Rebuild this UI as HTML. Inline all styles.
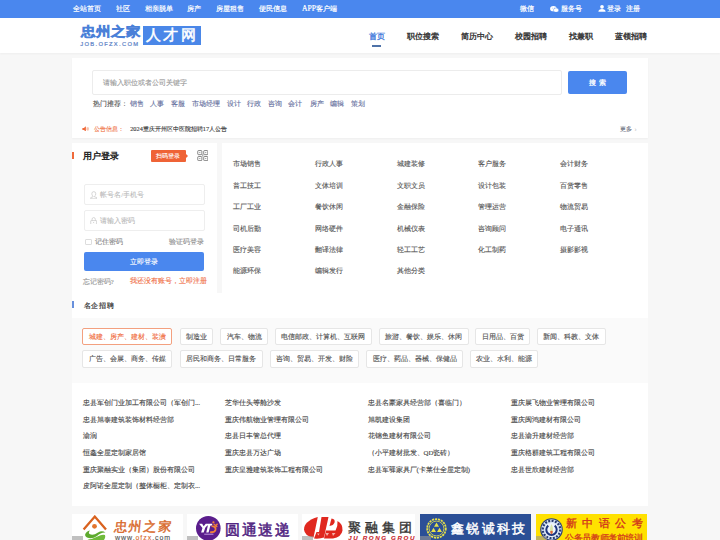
<!DOCTYPE html>
<html><head><meta charset="utf-8">
<style>
*{margin:0;padding:0;box-sizing:border-box}
html,body{width:720px;height:540px;overflow:hidden;background:#f7f7f7;font-family:"Liberation Serif",serif;color:#333}
.a,.cat,.tag,.co,.nav,#top span{-webkit-text-stroke:0.12px currentColor}
.a{position:absolute;white-space:nowrap}
#top{position:absolute;left:0;top:0;width:720px;height:17.5px;background:#4a87ee}
#top span{position:absolute;top:0;line-height:17.5px;font-size:6.8px;color:#fff;-webkit-text-stroke:0.2px #fff !important}
#hdr{position:absolute;left:0;top:17.5px;width:720px;height:35.5px;background:#fff;box-shadow:0 1px 2px rgba(0,0,0,.04)}
.nav{position:absolute;top:31.5px;font-size:7.9px;line-height:10px;color:#333;-webkit-text-stroke:0.35px currentColor !important}
.box{position:absolute;background:#fff}
.t7{font-size:6.8px;line-height:9px}
.cat{position:absolute;font-size:6.8px;line-height:9px;color:#555}
.tag{position:absolute;height:17.6px;border:1px solid #e6e6e6;border-radius:2px;background:#fff;font-size:6.8px;line-height:15.6px;color:#505050;text-align:center;white-space:nowrap}
.co{position:absolute;font-size:6.8px;line-height:9px;color:#444;white-space:nowrap}
</style></head><body>
<div id="top">
<span style="left:73px">全站首页</span>
<span style="left:116px">社区</span>
<span style="left:145px">相亲脱单</span>
<span style="left:187px">房产</span>
<span style="left:216px">房屋租售</span>
<span style="left:258.5px">便民信息</span>
<span style="left:302px"><i style="font-style:normal;font-size:7.6px">APP</i>客户端</span>
<span style="left:520px">微信</span>
<svg style="position:absolute;left:549.9px;top:5.6px" width="8.8" height="6.6" viewBox="0 0 13 10"><ellipse cx="5" cy="4" rx="5" ry="4" fill="#fff"/><ellipse cx="9" cy="6.3" rx="4" ry="3.4" fill="#fff" stroke="#4a87ee" stroke-width="0.7"/><circle cx="3.3" cy="3.2" r="0.6" fill="#4a87ee"/><circle cx="6.5" cy="3.2" r="0.6" fill="#4a87ee"/></svg>
<span style="left:561.1px">服务号</span>
<svg style="position:absolute;left:598px;top:5.4px" width="8" height="6.8" viewBox="0 0 10 8.5"><circle cx="5" cy="2.3" r="2.3" fill="#fff"/><path d="M0.5 8.5 Q0.8 5.2 5 5.1 Q9.2 5.2 9.5 8.5Z" fill="#fff"/></svg>
<span style="left:607.2px">登录</span>
<span style="left:626.3px">注册</span>
</div>
<div id="hdr"></div>
<!-- logo -->
<div class="a" style="left:80.5px;top:24.2px;font-family:'Liberation Sans',sans-serif;font-size:14.6px;color:#4a80d8;-webkit-text-stroke:1.2px #4a80d8;line-height:17px;letter-spacing:0.1px;transform:scaleY(0.9);transform-origin:0 0">忠州之家</div>
<div class="a" style="left:80.3px;top:40.5px;font-family:'Liberation Sans',sans-serif;font-size:5.8px;color:#5a7fc6;line-height:6px;letter-spacing:1.3px;-webkit-text-stroke:0.2px #5a7fc6">JOB.OFZX.COM</div>
<div class="a" style="left:142.9px;top:25.8px;width:57.8px;height:19.3px;background:#4a87e8"></div>
<div class="a" style="left:145.5px;top:26px;font-family:'Liberation Sans',sans-serif;color:#fff;font-size:14.5px;line-height:19px;letter-spacing:2.6px;-webkit-text-stroke:0.5px #fff">人才网</div>
<div class="nav" style="left:368.8px;color:#4a80dc">首页</div>
<div class="a" style="left:372px;top:45.4px;width:9px;height:1.5px;background:#4e72a8"></div>
<div class="nav" style="left:406.7px">职位搜索</div>
<div class="nav" style="left:460.8px">简历中心</div>
<div class="nav" style="left:515px">校园招聘</div>
<div class="nav" style="left:568.9px">找兼职</div>
<div class="nav" style="left:614.9px">蓝领招聘</div>

<!-- search box -->
<div class="box" style="left:72px;top:57.7px;width:576px;height:80.5px;box-shadow:0 1px 1.5px rgba(0,0,0,.035)"></div>
<div class="a" style="left:92.2px;top:70.1px;width:470px;height:24.5px;border:1px solid #ececec;border-radius:2px"></div>
<div class="a t7" style="left:103.3px;top:77.6px;color:#999">请输入职位或者公司关键字</div>
<div class="a" style="left:567.5px;top:70.5px;width:59.7px;height:23.7px;background:#4a87ee;border-radius:2px;color:#fff;font-size:7.4px;line-height:24.4px;text-align:center;letter-spacing:3.4px;text-indent:3.6px;-webkit-text-stroke:0.25px #fff !important">搜索</div>
<div class="a t7" style="left:92.9px;top:99.4px;color:#555">热门推荐：</div>
<div class="a t7" style="left:129.6px;top:99.4px;color:#66709e;word-spacing:0">
<span class="a" style="left:0">销售</span><span class="a" style="left:20.8px">人事</span><span class="a" style="left:41.5px">客服</span><span class="a" style="left:62.2px">市场经理</span><span class="a" style="left:97.1px">设计</span><span class="a" style="left:117.5px">行政</span><span class="a" style="left:138.2px">咨询</span><span class="a" style="left:158.8px">会计</span><span class="a" style="left:180px">房产</span><span class="a" style="left:200.4px">编辑</span><span class="a" style="left:221.5px">策划</span>
</div>
<svg class="a" style="left:82.3px;top:125.6px" width="7.2" height="5.8" viewBox="0 0 12 10"><path d="M0.5 3.3 H3 L6.5 0.5 V9.5 L3 6.7 H0.5Z" fill="#f06a3a"/><path d="M8.2 3 Q9.3 5 8.2 7 M9.8 1.8 Q11.6 5 9.8 8.2" fill="none" stroke="#f06a3a" stroke-width="0.9"/></svg>
<div class="a" style="left:94px;top:123.9px;font-size:6.3px;line-height:9px;color:#f0764a">公告信息：</div>
<div class="a" style="left:130.2px;top:123.9px;font-size:6.3px;line-height:9px;color:#333">2024重庆开州区中医院招聘17人公告</div>
<div class="a" style="left:620.3px;top:123.8px;font-size:6.3px;line-height:9px;color:#6a6f80">更多</div><div class="a" style="left:634.5px;top:123.5px;font-size:6.5px;line-height:9px;color:#c8c8c8">›</div>

<!-- login box -->
<div class="box" style="left:72px;top:143.3px;width:144.8px;height:150px"></div>
<div class="a" style="left:72.2px;top:151.8px;width:1.8px;height:7.3px;background:#f06a3a"></div>
<div class="a" style="left:83.3px;top:150.8px;font-size:8.8px;line-height:10px;color:#222;-webkit-text-stroke:0.4px #222 !important">用户登录</div>
<div class="a" style="left:151px;top:149.5px;width:34.8px;height:12.5px;background:#ef6336;border-radius:1px;color:#fff;font-size:6.3px;line-height:12.4px;text-align:center">扫码登录</div>
<div class="a" style="left:186px;top:153.6px;width:0;height:0;border-top:2.2px solid transparent;border-bottom:2.2px solid transparent;border-left:2.2px solid #ef6336"></div>
<svg class="a" style="left:196.6px;top:150.3px" width="11.6" height="11.2" viewBox="0 0 12 12"><g fill="none" stroke="#666" stroke-width="0.85"><rect x="0.6" y="0.6" width="4.4" height="4.4" rx="0.8"/><rect x="7" y="0.6" width="4.4" height="4.4" rx="0.8"/><rect x="0.6" y="7" width="4.4" height="4.4" rx="0.8"/><rect x="7" y="7" width="4.4" height="4.4" rx="0.8"/></g><g fill="#777"><rect x="2.3" y="2.3" width="1" height="1"/><rect x="8.7" y="2.3" width="1" height="1"/><rect x="2.3" y="8.7" width="1" height="1"/><rect x="8.7" y="8.7" width="1" height="1"/><rect x="5.6" y="4.5" width="0.9" height="2.6"/></g></svg>

<div class="a" style="left:84.2px;top:184.3px;width:120.6px;height:20.6px;border:1px solid #eee;border-radius:2px"></div>
<div class="a" style="left:84.2px;top:210.2px;width:120.6px;height:20.8px;border:1px solid #eee;border-radius:2px"></div>
<svg class="a" style="left:89.6px;top:190.6px" width="7.6" height="8.4" viewBox="0 0 10 11"><g fill="none" stroke="#c4c4c4" stroke-width="0.9"><path d="M5 0.8 Q7.6 0.8 7.6 3.6 Q7.6 6 5.9 6.8 V7.6 L9 8.6 V10.3 H1 V8.6 L4.1 7.6 V6.8 Q2.4 6 2.4 3.6 Q2.4 0.8 5 0.8Z"/></g></svg>
<div class="a t7" style="left:100.3px;top:190.1px;color:#bbb;font-size:6.5px">帐号名/手机号</div>
<svg class="a" style="left:89.8px;top:216.6px" width="7.4" height="7.8" viewBox="0 0 10 10.5"><g fill="none" stroke="#c4c4c4" stroke-width="0.9"><path d="M2.8 4.8 V3.2 Q2.8 0.7 5 0.7 Q7.2 0.7 7.2 3.2 V4.8"/><rect x="1" y="4.8" width="8" height="5.2" rx="0.6"/></g><circle cx="5" cy="7.4" r="0.7" fill="#c4c4c4"/></svg>
<div class="a t7" style="left:100.3px;top:216px;color:#bbb;font-size:6.5px">请输入密码</div>
<div class="a" style="left:84.8px;top:238.8px;width:6.8px;height:6.6px;border:1px solid #ddd;border-radius:1px"></div>
<div class="a t7" style="left:95px;top:236.6px;color:#8a8a8a">记住密码</div>
<div class="a t7" style="left:169.4px;top:236.6px;color:#8f8f8f">验证码登录</div>
<div class="a" style="left:84.2px;top:251.8px;width:120.2px;height:19.4px;background:#4a87ee;border-radius:2px;color:#fff;font-size:7px;line-height:21px;text-align:center">立即登录</div>
<div class="a t7" style="left:82.8px;top:276.5px;color:#999">忘记密码?</div>
<div class="a t7" style="left:130.1px;top:276.3px;color:#f0714a">我还没有账号，立即注册</div>

<!-- categories -->
<div class="box" style="left:221.9px;top:143.3px;width:426.1px;height:150px"></div>
<div class="cat" style="left:233.3px;top:159px">市场销售</div>
<div class="cat" style="left:315.0px;top:159px">行政人事</div>
<div class="cat" style="left:396.7px;top:159px">城建装修</div>
<div class="cat" style="left:478.3px;top:159px">客户服务</div>
<div class="cat" style="left:560.0px;top:159px">会计财务</div>
<div class="cat" style="left:233.3px;top:180.7px">普工技工</div>
<div class="cat" style="left:315.0px;top:180.7px">文体培训</div>
<div class="cat" style="left:396.7px;top:180.7px">文职文员</div>
<div class="cat" style="left:478.3px;top:180.7px">设计包装</div>
<div class="cat" style="left:560.0px;top:180.7px">百货零售</div>
<div class="cat" style="left:233.3px;top:202.3px">工厂工业</div>
<div class="cat" style="left:315.0px;top:202.3px">餐饮休闲</div>
<div class="cat" style="left:396.7px;top:202.3px">金融保险</div>
<div class="cat" style="left:478.3px;top:202.3px">管理运营</div>
<div class="cat" style="left:560.0px;top:202.3px">物流贸易</div>
<div class="cat" style="left:233.3px;top:223.7px">司机后勤</div>
<div class="cat" style="left:315.0px;top:223.7px">网络硬件</div>
<div class="cat" style="left:396.7px;top:223.7px">机械仪表</div>
<div class="cat" style="left:478.3px;top:223.7px">咨询顾问</div>
<div class="cat" style="left:560.0px;top:223.7px">电子通讯</div>
<div class="cat" style="left:233.3px;top:245px">医疗美容</div>
<div class="cat" style="left:315.0px;top:245px">翻译法律</div>
<div class="cat" style="left:396.7px;top:245px">轻工工艺</div>
<div class="cat" style="left:478.3px;top:245px">化工制药</div>
<div class="cat" style="left:560.0px;top:245px">摄影影视</div>
<div class="cat" style="left:233.3px;top:266.3px">能源环保</div>
<div class="cat" style="left:315.0px;top:266.3px">编辑发行</div>
<div class="cat" style="left:396.7px;top:266.3px">其他分类</div>


<!-- famous companies -->
<div class="box" style="left:72px;top:293px;width:576px;height:212.7px"></div>
<div class="a" style="left:72px;top:301px;width:1.9px;height:7.2px;background:#6890dc"></div>
<div class="a" style="left:83.6px;top:301px;font-size:7.4px;line-height:9px;color:#333;letter-spacing:0.85px;-webkit-text-stroke:0.2px #333 !important">名企招聘</div>
<div class="a" style="left:72px;top:317.8px;width:576px;height:65.5px;background:#fafafa"></div>
<div class="tag" style="left:82.1px;top:327.9px;width:90.4px;border-color:#f3a07f;color:#f06a3a;">城建、房产、建材、装潢</div>
<div class="tag" style="left:179.6px;top:327.9px;width:33.7px;">制造业</div>
<div class="tag" style="left:220.4px;top:327.9px;width:47.9px;">汽车、物流</div>
<div class="tag" style="left:275px;top:327.9px;width:96.7px;">电信邮政、计算机、互联网</div>
<div class="tag" style="left:378.75px;top:327.9px;width:90.4px;">旅游、餐饮、娱乐、休闲</div>
<div class="tag" style="left:475.4px;top:327.9px;width:54.6px;">日用品、百货</div>
<div class="tag" style="left:537px;top:327.9px;width:68.8px;">新闻、科教、文体</div>
<div class="tag" style="left:82.1px;top:350.4px;width:90.4px;">广告、会展、商务、传媒</div>
<div class="tag" style="left:179.6px;top:350.4px;width:83.3px;">居民和商务、日常服务</div>
<div class="tag" style="left:269.6px;top:350.4px;width:89.9px;">咨询、贸易、开发、财险</div>
<div class="tag" style="left:366.25px;top:350.4px;width:96.6px;">医疗、药品、器械、保健品</div>
<div class="tag" style="left:469.6px;top:350.4px;width:68.7px;">农业、水利、能源</div>

<div class="co" style="left:82.9px;top:398.0px">忠县军创门业加工有限公司（军创门...</div>
<div class="co" style="left:82.9px;top:415.05px">忠县旭泰建筑装饰材料经营部</div>
<div class="co" style="left:82.9px;top:431.3px">渝润</div>
<div class="co" style="left:82.9px;top:448.0px">恒鑫全屋定制家居馆</div>
<div class="co" style="left:82.9px;top:464.6px">重庆聚融实业（集团）股份有限公司</div>
<div class="co" style="left:82.9px;top:481.3px">皮阿诺全屋定制（整体橱柜、定制衣...</div>
<div class="co" style="left:225.4px;top:398.0px">芝华仕头等舱沙发</div>
<div class="co" style="left:225.4px;top:415.05px">重庆伟航物业管理有限公司</div>
<div class="co" style="left:225.4px;top:431.3px">忠县日丰管总代理</div>
<div class="co" style="left:225.4px;top:448.0px">重庆忠县万达广场</div>
<div class="co" style="left:225.4px;top:464.6px">重庆皇雅建筑装饰工程有限公司</div>
<div class="co" style="left:367.5px;top:398.0px">忠县名豪家具经营部（喜临门）</div>
<div class="co" style="left:367.5px;top:415.05px">旭凯建设集团</div>
<div class="co" style="left:367.5px;top:431.3px">花锦鱼建材有限公司</div>
<div class="co" style="left:367.5px;top:448.0px">（小平建材批发、QD瓷砖）</div>
<div class="co" style="left:367.5px;top:464.6px">忠县军驿家具厂(卡莱仕全屋定制)</div>
<div class="co" style="left:510.8px;top:398.0px">重庆展飞物业管理有限公司</div>
<div class="co" style="left:510.8px;top:415.05px">重庆闽鸿建材有限公司</div>
<div class="co" style="left:510.8px;top:431.3px">忠县渝升建材经营部</div>
<div class="co" style="left:510.8px;top:448.0px">重庆格群建筑工程有限公司</div>
<div class="co" style="left:510.8px;top:464.6px">忠县世欣建材经营部</div>


<!-- logos -->
<!-- logo 1 -->
<div class="a" style="left:72px;top:513.8px;width:111px;height:30px;background:#fff;overflow:hidden">
<svg style="position:absolute;left:9px;top:1px" width="26" height="28" viewBox="0 0 26 28">
<path d="M2.6 14.6 L13.8 1.6 L25 14.6" fill="none" stroke="#d9621f" stroke-width="2.3" stroke-linejoin="miter"/>
<circle cx="13.5" cy="11.3" r="2.4" fill="#e2742e"/>
<path d="M4 20 Q5 16 9 15.5 Q7 17.5 8.5 19 Q12 21 17 17.5 Q21 15 24.5 17.5 Q20 17 16 21 Q11 24.5 6 22.5 Q4.5 21.5 4 20Z" fill="#5daa2e"/>
<path d="M6.5 24.5 Q12 24 16.5 21.5 Q21 19 24 20 Q25 23 22 26 Q15 28 6.5 24.5Z" fill="#6fbb3a"/>
</svg>
<div style="position:absolute;left:42px;top:5.2px;font-family:'Liberation Serif',serif;font-size:13px;line-height:15px;color:#d8692a;letter-spacing:1.9px;-webkit-text-stroke:0.45px #d8692a;transform:skewX(-6deg)">忠州之家</div>
<div style="position:absolute;left:43px;top:20.6px;font-family:'Liberation Sans',sans-serif;font-size:7px;line-height:8px;color:#555;letter-spacing:0.95px">www.<span style="color:#d8692a">ofzx</span>.com</div>
</div>
<!-- logo 2 -->
<div class="a" style="left:186.7px;top:513.8px;width:111px;height:30px;background:#fff;overflow:hidden">
<svg style="position:absolute;left:9.7px;top:2.4px" width="24.6" height="24.6" viewBox="0 0 24 24"><circle cx="12" cy="12" r="12" fill="#5a1d8c"/>
<path d="M3 7.5 H6 L7.5 10 L9.5 7.5 H12.5 L9 11.5 L7.5 16 H5 L6.3 11.8Z M11 7.5 H16 L15.5 9.2 H14 L12.3 16 H10 L11.6 9.2 H10.6Z" fill="#fff"/>
<path d="M15.2 9.8 Q19.8 10.3 19 13.6 Q18.2 16.2 13.8 15.8" fill="none" stroke="#f07f3a" stroke-width="1.8"/><path d="M17.3 7.8 L20.8 10.8 M21 7.6 L18.6 10.2" fill="none" stroke="#f07f3a" stroke-width="1.3"/><circle cx="17" cy="6.2" r="1.1" fill="#f07f3a"/>
<rect x="8" y="17.3" width="9" height="0.9" fill="#c9a0e8"/></svg>
<div style="position:absolute;left:38.5px;top:7.3px;font-family:'Liberation Sans',sans-serif;font-size:15px;line-height:18px;color:#532783;letter-spacing:1.5px;-webkit-text-stroke:0.55px #532783">圆通速递</div>
</div>
<!-- logo 3 -->
<div class="a" style="left:301.7px;top:513.8px;width:113.5px;height:30px;background:#fff;overflow:hidden">
<svg style="position:absolute;left:-1.7px;top:-1.8px" width="46" height="30" viewBox="0 0 46 30">
<path d="M4 17.5 Q4 9 17.8 5 L13.5 25.5 Q4.5 24 4 17.5Z" fill="#e0281f"/>
<path d="M21.5 5 H28.5 L24 25.5 Q20 27 14 26.5 L16.5 20 H19Z" fill="#e0281f"/>
<path d="M31.5 6.5 Q35.5 7 34.5 10.5 Q33.5 13.5 29.5 14 Z" fill="#e0281f"/>
<path d="M37.5 9 Q43 12 42.5 18.5 Q41.5 25 33 26.5 L24 26.5 L26 18.5 H35.5 Q38 14 37.5 9Z" fill="#e0281f"/>
<path d="M17 21.5 L19.5 21.5 L18.5 23.5Z M25.5 21 H29 L27 24Z M32 21 H35.5 L33 24Z" fill="#f6b0a8"/>
</svg>
<div style="position:absolute;left:46.8px;top:6.3px;font-family:'Liberation Sans',sans-serif;font-size:13px;line-height:15px;color:#333;letter-spacing:4px;-webkit-text-stroke:0.35px #333">聚融集团</div>
<div style="position:absolute;left:46.6px;top:20.5px;font-family:'Liberation Sans',sans-serif;font-size:6.2px;line-height:8px;color:#c8232a;letter-spacing:1.6px;font-style:italic;font-weight:bold">JU RONG GROUP</div>
</div>
<!-- logo 4 -->
<div class="a" style="left:420px;top:513.8px;width:110.5px;height:30px;background:#2b4f96;overflow:hidden">
<svg style="position:absolute;left:5.5px;top:4px" width="21" height="21" viewBox="0 0 21 21"><circle cx="10.5" cy="10.5" r="9.3" fill="none" stroke="#e6e04a" stroke-width="1.8" stroke-dasharray="2.2 0.8"/><circle cx="10.5" cy="10.5" r="7.4" fill="none" stroke="#e6e04a" stroke-width="0.8"/>
<path d="M10.5 4.5 L13 8.8 H8Z M7.5 9.8 L10 14 H5Z M13.5 9.8 L16 14 H11Z" fill="#e6e04a"/></svg>
<div style="position:absolute;left:31px;top:7px;font-family:'Liberation Sans',sans-serif;font-size:13px;line-height:15px;color:#fff;letter-spacing:2.3px;-webkit-text-stroke:0.45px #fff">鑫锐诚科技</div>
</div>
<!-- logo 5 -->
<div class="a" style="left:535.5px;top:513.8px;width:111.3px;height:30px;background:#ffe100;overflow:hidden">
<svg style="position:absolute;left:4.3px;top:4.3px" width="23" height="23" viewBox="0 0 23 23"><circle cx="11.5" cy="11.5" r="11.3" fill="#2b3f78"/><circle cx="11.5" cy="11.5" r="10.2" fill="#d6e4f4"/><circle cx="11.5" cy="11.5" r="8.7" fill="none" stroke="#2a3d72" stroke-width="2.2" stroke-dasharray="2 1.4"/><circle cx="11.5" cy="12" r="7" fill="#eef4fb"/><path d="M8.3 7.6 A5.2 5.2 0 1 0 14.7 7.6" fill="none" stroke="#1d3680" stroke-width="2"/><path d="M11.5 6 Q13.6 9.5 12.8 15 Q11.5 16.5 10.2 15 Q9.4 9.5 11.5 6Z" fill="#d9e6a8"/><path d="M10.2 13.3 Q11.5 12.2 12.8 13.3 Q12.8 15.8 11.5 16.4 Q10.2 15.8 10.2 13.3Z" fill="#e0603a"/></svg>
<div style="position:absolute;left:30px;top:3.8px;font-family:'Liberation Serif',serif;font-size:10.6px;line-height:12px;color:#d2361c;letter-spacing:5.5px;-webkit-text-stroke:0.35px #d2361c">新中语公考</div>
<div style="position:absolute;left:29.8px;top:18.8px;font-family:'Liberation Serif',serif;font-size:9px;line-height:10px;color:#d2361c;letter-spacing:-0.4px;-webkit-text-stroke:0.25px #d2361c">公务员教师考前培训</div>
</div>
<!-- ad labels -->
<div class="a" style="left:72px;top:535.5px;width:11px;height:5px;background:rgba(150,150,150,.6)"></div>
<div class="a" style="left:186.7px;top:535.5px;width:11px;height:5px;background:rgba(150,150,150,.6)"></div>
<div class="a" style="left:301.7px;top:535.5px;width:11px;height:5px;background:rgba(150,150,150,.6)"></div>
<div class="a" style="left:420px;top:535.5px;width:11px;height:5px;background:rgba(150,150,150,.6)"></div>
<div class="a" style="left:535.5px;top:535.5px;width:11px;height:5px;background:rgba(150,150,150,.6)"></div>

</body></html>
